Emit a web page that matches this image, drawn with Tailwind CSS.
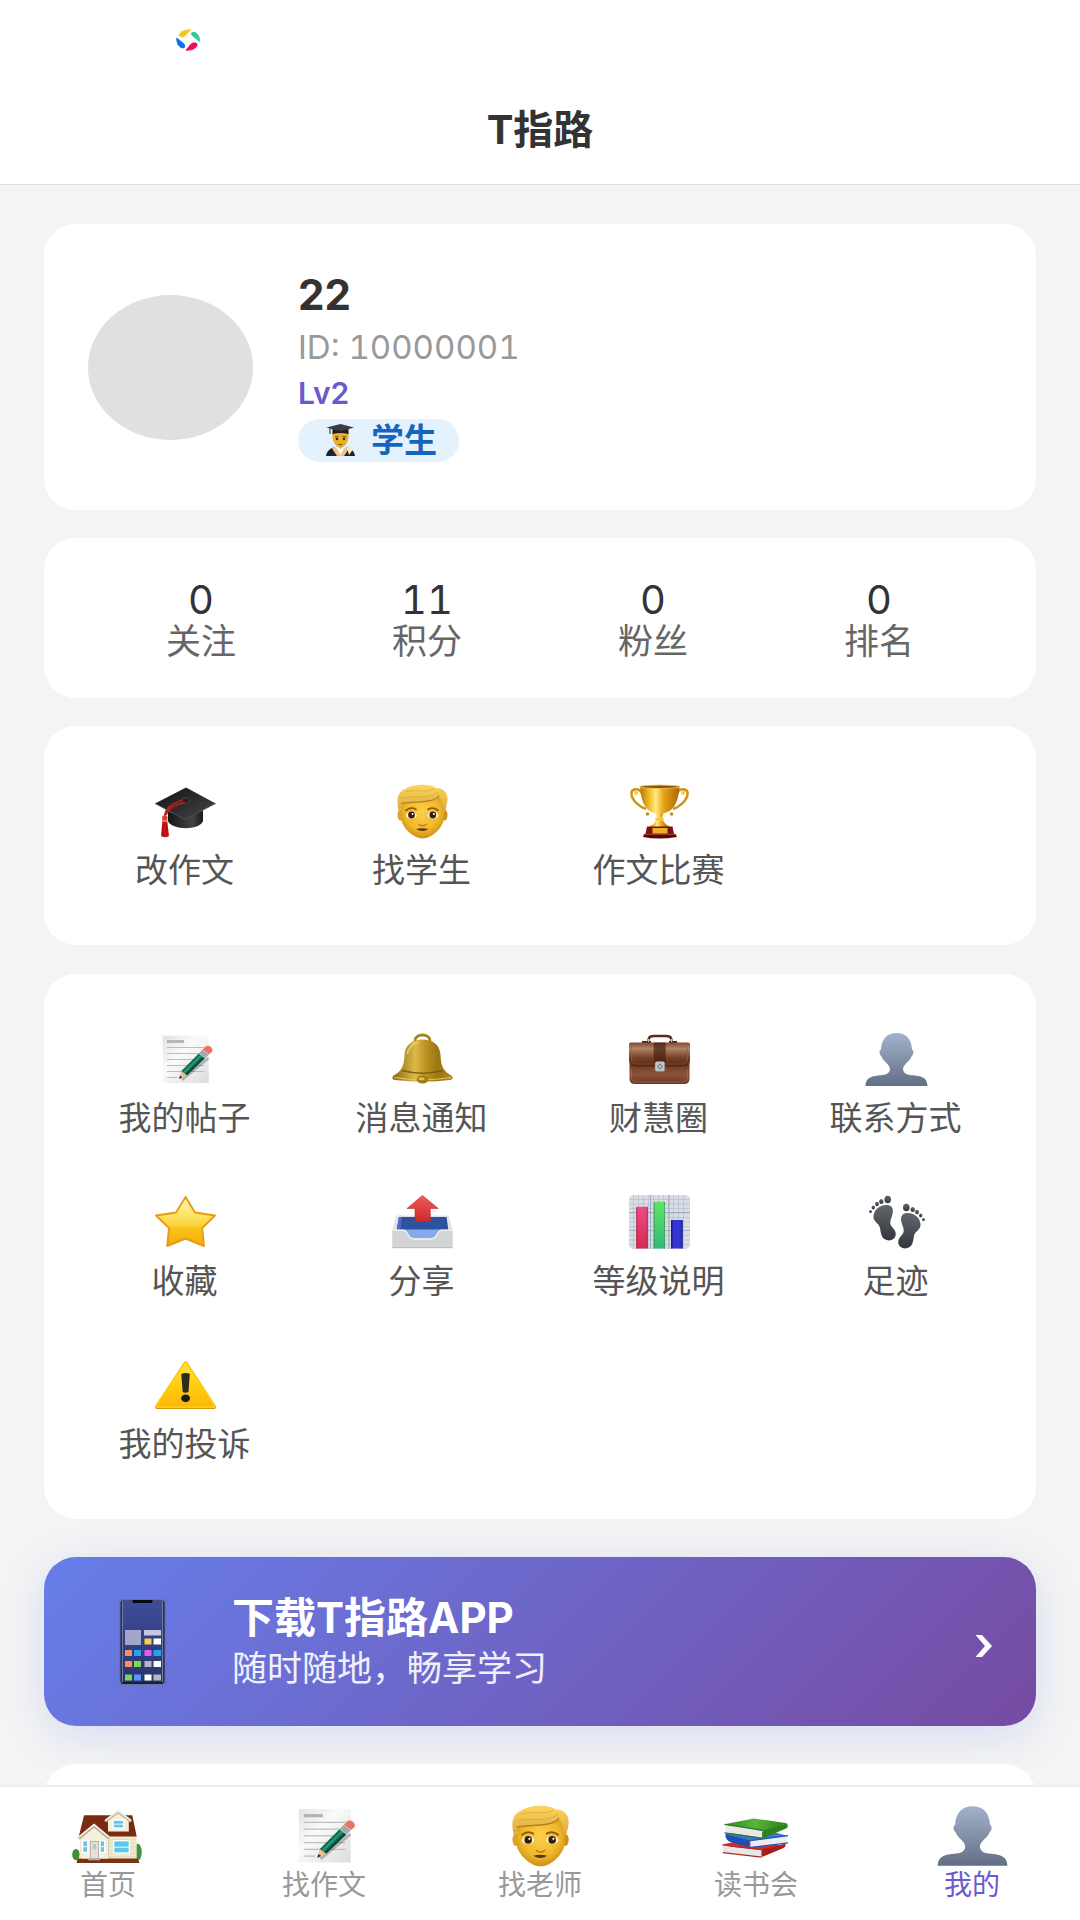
<!DOCTYPE html>
<html lang="zh-CN">
<head>
  <meta charset="UTF-8">
  <title>T指路</title>
  <meta name="viewport" content="width=device-width, initial-scale=1.0">
  <script src="https://cdn.jsdelivr.net/npm/@tailwindcss/browser@4"></script>
</head>
<body class="bg-[#f4f4f4] text-[#333] h-screen flex flex-col overflow-hidden font-['Inter','Noto_Sans_CJK_SC',sans-serif]">

  <!-- shared icons -->
  <svg class="absolute size-0" aria-hidden="true">
    <defs>
      <linearGradient id="g-board" x1="0" y1="0" x2="1" y2="1"><stop offset="0" stop-color="#111"/><stop offset=".5" stop-color="#2c2c2e"/><stop offset="1" stop-color="#4a4a4a"/></linearGradient>
      <linearGradient id="g-cap" x1="0" y1="0" x2="1" y2="0"><stop offset="0" stop-color="#141414"/><stop offset=".7" stop-color="#444"/><stop offset="1" stop-color="#1a1a1a"/></linearGradient>
      <radialGradient id="g-face" cx=".5" cy=".4" r=".6"><stop offset="0" stop-color="#fbd04a"/><stop offset=".65" stop-color="#f0b92c"/><stop offset="1" stop-color="#cc8f14"/></radialGradient>
      <linearGradient id="g-hair" x1="0" y1="0" x2="0" y2="1"><stop offset="0" stop-color="#fbd65c"/><stop offset="1" stop-color="#dba63a"/></linearGradient>
      <linearGradient id="g-gold" x1="0" y1="0" x2="1" y2="0"><stop offset="0" stop-color="#b9720a"/><stop offset=".25" stop-color="#f5c22a"/><stop offset=".4" stop-color="#ffe98a"/><stop offset=".6" stop-color="#e5a315"/><stop offset="1" stop-color="#a8640a"/></linearGradient>
      <linearGradient id="g-paper" x1="0" y1="0" x2="1" y2="1"><stop offset="0" stop-color="#e2e2e2"/><stop offset=".4" stop-color="#fafafa"/><stop offset="1" stop-color="#dcdcdc"/></linearGradient>
      <linearGradient id="g-bell" x1="0" y1="0" x2="1" y2="0"><stop offset="0" stop-color="#8a680c"/><stop offset=".38" stop-color="#dcb94a"/><stop offset=".55" stop-color="#bd9422"/><stop offset=".75" stop-color="#9c7712"/><stop offset="1" stop-color="#b08a1e"/></linearGradient>
      <linearGradient id="g-flap" x1="0" y1="0" x2="0" y2="1"><stop offset="0" stop-color="#7d4a30"/><stop offset=".25" stop-color="#b08465"/><stop offset=".6" stop-color="#7c452b"/><stop offset="1" stop-color="#54240f"/></linearGradient>
      <linearGradient id="g-case" x1="0" y1="0" x2="0" y2="1"><stop offset="0" stop-color="#5e2f1a"/><stop offset=".6" stop-color="#8a5438"/><stop offset="1" stop-color="#6a3720"/></linearGradient>
      <linearGradient id="g-bust" x1="0" y1="0" x2="0" y2="1"><stop offset="0" stop-color="#a3b2cb"/><stop offset="1" stop-color="#626e84"/></linearGradient>
      <linearGradient id="g-star" x1="0" y1="0" x2="0" y2="1"><stop offset="0" stop-color="#fff6c4"/><stop offset=".3" stop-color="#fde773"/><stop offset=".58" stop-color="#fbd43a"/><stop offset=".62" stop-color="#f9c41c"/><stop offset="1" stop-color="#f5ac08"/></linearGradient>
      <linearGradient id="g-arrow" x1="0" y1="0" x2="0" y2="1"><stop offset="0" stop-color="#ef5b58"/><stop offset="1" stop-color="#d0282c"/></linearGradient>
      <linearGradient id="g-red" x1="0" y1="0" x2="0" y2="1"><stop offset="0" stop-color="#ee4a86"/><stop offset="1" stop-color="#d52a50"/></linearGradient>
      <linearGradient id="g-green" x1="0" y1="0" x2="0" y2="1"><stop offset="0" stop-color="#62e468"/><stop offset="1" stop-color="#35b877"/></linearGradient>
      <linearGradient id="g-warn" x1="0" y1="0" x2="0" y2="1"><stop offset="0" stop-color="#ffe14a"/><stop offset=".5" stop-color="#ffce10"/><stop offset="1" stop-color="#fcb80a"/></linearGradient>
      <linearGradient id="g-foot" x1="0" y1="0" x2="0" y2="1"><stop offset="0" stop-color="#62666e"/><stop offset="1" stop-color="#34373d"/></linearGradient>
      <linearGradient id="g-screen" x1="0" y1="0" x2="0" y2="1"><stop offset="0" stop-color="#3f4c9c"/><stop offset="1" stop-color="#27356c"/></linearGradient>
      <linearGradient id="g-book" x1="0" y1="0" x2="1" y2="0"><stop offset="0" stop-color="#2f8a1e"/><stop offset=".5" stop-color="#58b53c"/><stop offset="1" stop-color="#2b7d18"/></linearGradient>
    </defs>

    <symbol id="cap" viewBox="0 0 64 56">
      <path d="M15 27V37C18 46 46 47 50 37V26L32 34Z" fill="url(#g-cap)"/>
      <path d="M2 19.5 33 3.5 62.7 19.5 31.7 35.5Z" fill="url(#g-board)"/>
      <path d="M2 19.5 31.7 35.5 62.7 19.5" fill="none" stroke="#555" stroke-width=".7"/>
      <ellipse cx="32.5" cy="16.8" rx="4" ry="3" fill="#222" stroke="#555" stroke-width=".6"/>
      <path d="M30 16C20 19 12 23 11.5 34M32 18.5C22 20 15 25 13 31" fill="none" stroke="#b8201c" stroke-width="1.7"/>
      <path d="M9.5 35H14L16 52Q12 54.5 8 52Z" fill="#cc1416"/>
      <path d="M10.5 40 10 52M13.5 40 14 52" stroke="#8c0808" stroke-width=".7"/>
      <ellipse cx="11.8" cy="34" rx="2.7" ry="2.8" fill="#e03a34"/>
      <path d="M9.2 37H14.8" stroke="#f0b0a0" stroke-width="1.2"/>
    </symbol>

    <symbol id="head" viewBox="0 0 64 56">
      <ellipse cx="10.5" cy="31" rx="3" ry="5.5" fill="#dda324"/>
      <ellipse cx="54.5" cy="31" rx="3" ry="5.5" fill="#d09018"/>
      <path d="M11 18C11 8 54 8 54 18L54 33C54 43 42 54.5 32.6 54.5S11 43 11 33Z" fill="url(#g-face)"/>
      <path d="M9 28C6 17 7 8 15 5 22 0 40-1 46 4 55 4 59 11 57 19L55 29C52 23 53 19 49 12.5 44 20 24 18 12 20 11 23 11 26 9 28Z" fill="url(#g-hair)"/>
      <path d="M11.5 19.5C28 17 44 19.5 49 11.5" fill="none" stroke="#b87e1c" stroke-width="1.3"/>
      <path d="M11 14C25 11 40 16 48 8M15 8C24 5 36 9 44 5" fill="none" stroke="#dba941" stroke-width=".8"/>
      <path d="M16 26.5Q21 22.5 26 25.5M38 25.5Q43 22.5 48 26.5" fill="none" stroke="#8b5a0c" stroke-width="1.7" stroke-linecap="round"/>
      <ellipse cx="21.3" cy="31.3" rx="5.3" ry="3.5" fill="#fff6df"/>
      <ellipse cx="43" cy="31.3" rx="5.3" ry="3.5" fill="#fff6df"/>
      <circle cx="21.5" cy="31" r="3.4" fill="#35200f"/>
      <circle cx="42.8" cy="31" r="3.4" fill="#35200f"/>
      <circle cx="22.6" cy="30" r="1" fill="#fff"/>
      <circle cx="43.9" cy="30" r="1" fill="#fff"/>
      <path d="M29 40.5Q32.5 43 36 40.5" fill="none" stroke="#b97a12" stroke-width="1.4" stroke-linecap="round"/>
      <path d="M26 45Q32.3 43.5 38.5 45 32.5 49 26 45Z" fill="#5f3412"/>
    </symbol>

    <symbol id="trophy" viewBox="0 0 64 56">
      <path d="M15 9C11 3 4 5 4.5 10 5 17 13 23 19 25M50 9C54 3 61 5 60.5 10 60 17 52 23 46 25" fill="none" stroke="#cf961a" stroke-width="2.6"/>
      <circle cx="9" cy="9" r="2" fill="#f1cc55"/><circle cx="56" cy="9" r="2" fill="#f1cc55"/>
      <circle cx="20.5" cy="30" r="1.8" fill="#c98d18"/><circle cx="44.5" cy="30" r="1.8" fill="#c98d18"/>
      <path d="M13 2.5C14 16 17 29 32.5 30 48 29 51.5 16 52.5 2.5Z" fill="url(#g-gold)"/>
      <ellipse cx="32.7" cy="2.8" rx="20" ry="1.7" fill="#8c5407" stroke="#f5cd50" stroke-width=".8"/>
      <path d="M28.5 29.5H36.5L35 34Q37 40 43 43H22Q28 40 30 34Z" fill="url(#g-gold)"/>
      <ellipse cx="32.5" cy="35" rx="4.5" ry="1.8" fill="#f3cb47"/>
      <path d="M20 42.5H45.5L47 50H18.5Z" fill="#7c140e"/>
      <path d="M17 50H48.5L50 53Q32 56 16 53Z" fill="#5a0b08"/>
      <path d="M17 50.3H48.5" stroke="#c0504a" stroke-width=".8"/>
      <rect x="25.5" y="44" width="15" height="5.5" fill="#e9b22c"/>
    </symbol>

    <symbol id="memo" viewBox="0 0 64 56">
      <rect x="9.7" y="3.7" width="46" height="47.3" fill="url(#g-paper)"/>
      <path d="M14 9.5H31" stroke="#b2b2b2" stroke-width="2.8"/>
      <path d="M14 15.5H51M14 21.5H51M14 27.5H51M14 33.5H51M14 39.5H51M14 45.5H24" stroke="#bdbdbd" stroke-width="1.1"/>
      <path d="M29 48 55.5 26" fill="none" stroke="#000" stroke-opacity=".25" stroke-width="2.5"/>
      <path d="M26 47 28.3 39 34 43.2Z" fill="#efbd92"/>
      <path d="M26 47 27 43.6 29.5 45.4Z" fill="#333"/>
      <path d="M28.3 39 45.8 21.5 51.8 26.3 34 43.2Z" fill="#0e6b52"/>
      <path d="M30 40 47 23 48.8 24.3 31.8 41.3Z" fill="#2c9474"/>
      <path d="M34 43.2 51.8 26.3 50.3 25 32.5 42Z" fill="#084536"/>
      <path d="M45.8 21.5 49.8 17.5 56 22.3 51.8 26.3Z" fill="#b6babb"/>
      <path d="M47.2 20.2 53.2 25M48.6 18.8 54.6 23.6" stroke="#7e8586" stroke-width=".8"/>
      <path d="M49.8 17.5 52.5 14.5Q55 13 58 15 60.5 17.500 58.800 20L56 22.3Z" fill="#e8736a"/>
    </symbol>

    <symbol id="bell" viewBox="0 0 64 56">
      <path d="M25 9C25 1 40 1 40 9" fill="none" stroke="#a8841e" stroke-width="2.8"/>
      <path d="M14.5 23C15 12 23 7.5 32.5 7.5S50 12 50.5 23C51 34 53 39 62 44Q64 47 60 48 33 51.5 5 48 1 47 3 44C12 39 14 34 14.5 23Z" fill="url(#g-bell)"/>
      <path d="M12 38.5Q32 44 53 38.5" fill="none" stroke="#7c5e0c" stroke-width="1.3"/>
      <path d="M4 45.5Q32 50 61 45.5" fill="none" stroke="#e3c766" stroke-width="1"/>
      <path d="M17 22Q20 12 29 10" fill="none" stroke="#e9cf72" stroke-width="1.6"/>
      <ellipse cx="32.5" cy="47.5" rx="5.8" ry="4" fill="#a07a16"/>
      <ellipse cx="31.5" cy="46.8" rx="3" ry="1.5" fill="#dfc05a"/>
    </symbol>

    <symbol id="briefcase" viewBox="0 0 64 56">
      <path d="M21.5 10V7.5Q22 4 27 4H39Q44 4 44.5 7.5V10" fill="none" stroke="#5b2c1c" stroke-width="2.3"/>
      <path d="M15 10H24M42 10H50" stroke="#4b2110" stroke-width="2"/>
      <path d="M21.5 7V10M44.5 7V10" stroke="#c9c9c9" stroke-width="1.4"/>
      <path d="M2.5 28H62.5V47Q62.5 52 57 52H8Q2.5 52 2.5 47Z" fill="url(#g-case)"/>
      <path d="M2 12Q2 10.5 4 10.5H61Q63 10.5 63 12V29Q62 34.5 56 34.5H9Q3 34.5 2 29Z" fill="url(#g-flap)"/>
      <path d="M4.5 12.5V28Q5 32 10 32H55Q60 32 60.5 28V12.5" fill="none" stroke="#8f6045" stroke-width=".6"/>
      <path d="M4.5 37V46Q5 50 9 50H56Q60 50 60.5 46V37" fill="none" stroke="#a3755a" stroke-width=".6"/>
      <rect x="26.7" y="10.5" width="12" height="24" fill="#49200f" fill-opacity=".7"/>
      <rect x="28" y="29.5" width="9.8" height="10" rx="1.8" fill="#c4c7c8" stroke="#777" stroke-width=".6"/>
      <path d="M32.9 31.3 36 34.5 32.9 37.7 29.8 34.5Z" fill="#7f8485"/>
      <circle cx="32.9" cy="34.5" r="1" fill="#f3f3f3"/>
    </symbol>

    <symbol id="bust" viewBox="0 0 64 56">
      <path d="M32.5 1C42 1 47.5 7 48 17.5 50 18.5 50 22 47.5 24.5 45.5 30 39 32 39 37.5 40 43 46 43 51 43.5 60 44.5 63 47 63.5 54H1.5C2 47 5 44.5 14 43.5 19 43 25 43 26 37.500 26 32 19.5 30 17.5 24.5 15 22 15 18.5 17 17.5 17.5 7 23 1 32.5 1Z" fill="url(#g-bust)"/>
    </symbol>

    <symbol id="star" viewBox="0 0 64 56">
      <path d="M32.6 2 42 17.5 62 20.5 49.2 33 51 51 32.6 43.5 14.2 51 16 33 3 20.5 23 17.5Z" fill="url(#g-star)" stroke="#e79b12" stroke-width="1.9" stroke-linejoin="round"/>
    </symbol>

    <symbol id="outbox" viewBox="0 0 64 56">
      <path d="M6.5 20.5H58.5L62.7 35H2.2Z" fill="#dfe3e9"/>
      <path d="M9 22H56.5L58.5 36H6.5Z" fill="#2f529f"/>
      <path d="M9 22 12 22 10.5 34 6.5 36Z" fill="#4a71c0"/>
      <path d="M13 34.5H52V46H13Z" fill="#85aaea"/>
      <path d="M25 13.5H17L32.4 .5 48.3 13.5H40.3V26.5H25Z" fill="url(#g-arrow)" stroke="#bd2529" stroke-width=".6"/>
      <path d="M2.2 34.7H13Q16 34.7 18 39 20 43.5 25 43.5H40Q45 43.5 47 39 49 34.7 52 34.7H62.7V53H2.2Z" fill="#d3d4d5"/>
      <path d="M2.2 35.2H13Q16 35.2 18 39.5 20 44 25 44H40Q45 44 47 39.5 49 35.2 52 35.2H62.7" fill="none" stroke="#f4f5f6" stroke-width="1.3"/>
      <path d="M2.2 52.7H62.7" stroke="#b3b3b3" stroke-width=".8"/>
    </symbol>

    <symbol id="chart" viewBox="0 0 64 56">
      <rect x="2" y="0" width="61" height="54" rx="4.5" fill="#d9dde6"/>
      <path d="M6.5 0V54M11.5 0V54M16.5 0V54M21.5 0V54M26.5 0V54M31.5 0V54M36.5 0V54M41.5 0V54M46.5 0V54M51.5 0V54M56.5 0V54M2 4.5H63M2 9H63M2 13.5H63M2 18H63M2 22.5H63M2 27H63M2 31.5H63M2 40.5H63M2 45H63M2 49.5H63" stroke="#b7bdcc" stroke-width=".7"/>
      <path d="M2 17.5H63M2 35.5H63M23.5 0V54M42 0V54" stroke="#98a0b5" stroke-width=".8"/>
      <path d="M9.3 11.7H20.7V53.5H9.3Z" fill="url(#g-red)"/>
      <path d="M26.7 6.7H38V53.5H26.7Z" fill="url(#g-green)"/>
      <path d="M44 25H55.5V53.5H44Z" fill="#3434cf"/>
      <path d="M9.8 12V53.5M20.3 12V53.5" stroke="#a51f45" stroke-width=".8"/>
      <path d="M27.2 7V53.5M37.6 7V53.5" stroke="#37a058" stroke-width=".8"/>
      <path d="M44.8 25V53.5M55 25V53.5" stroke="#181879" stroke-width="1.2"/>
    </symbol>

    <symbol id="feet" viewBox="0 0 64 56">
      <g fill="url(#g-foot)">
        <ellipse cx="23.7" cy="4.5" rx="3.3" ry="3.8"/>
        <ellipse cx="17.3" cy="6.5" rx="2.2" ry="2.5"/>
        <ellipse cx="13" cy="9" rx="1.9" ry="2.2"/>
        <ellipse cx="9.3" cy="12.5" rx="1.7" ry="1.9"/>
        <ellipse cx="6.5" cy="16.5" rx="1.5" ry="1.6"/>
        <path d="M9.5 21C10 14 17 9.5 23 10 29 10.5 30 15 28 21 26 27 25 29 29 33 34 38 32 45 25 45.5 18 45 17 40 16 33 15 28 9 27 9.5 21Z"/>
        <ellipse cx="42.3" cy="12.5" rx="3.3" ry="3.8"/>
        <ellipse cx="48.7" cy="14.5" rx="2.2" ry="2.5"/>
        <ellipse cx="53" cy="17" rx="1.9" ry="2.2"/>
        <ellipse cx="56.7" cy="20.5" rx="1.7" ry="1.9"/>
        <ellipse cx="59.5" cy="24.5" rx="1.5" ry="1.6"/>
        <path d="M56.5 29C56 22 49 17.5 43 18 37 18.5 36 23 38 29 40 35 41 37 37 41 32 46 34 53 41 53.5 48 53 49 48 50 41 51 36 57 35 56.5 29Z"/>
      </g>
    </symbol>

    <symbol id="warning" viewBox="0 0 64 56">
      <path d="M32.6 5.5 61 49H4Z" fill="#d79a08" stroke="#d79a08" stroke-width="4" stroke-linejoin="round"/>
      <path d="M32.6 5 61 48.2H4Z" fill="#ffcb0f" stroke="#ffcb0f" stroke-width="3.6" stroke-linejoin="round"/>
      <path d="M32.6 5 61 48.2H4Z" fill="url(#g-warn)"/>
      <path d="M28.3 16Q32.5 14 36.8 16L35.5 34Q32.5 35.5 29.7 34Z" fill="#2d2c20"/>
      <ellipse cx="32.6" cy="40.3" rx="4.4" ry="3.9" fill="#1d1c18"/>
    </symbol>

    <symbol id="house" viewBox="0 0 64 56">
      <ellipse cx="3.5" cy="44" rx="3.3" ry="5" fill="#3d8f3a"/>
      <ellipse cx="58.3" cy="42" rx="3.7" ry="7.500" fill="#3f9440"/>
      <path d="M7 27H57.5V48H7Z" fill="#f1ead0"/>
      <path d="M33 31H57M33 34H57M33 37H57M33 40H57M33 43H57M33 46H57" stroke="#d8cfae" stroke-width=".6"/>
      <path d="M5 47.5H58.5L60 51.5H4Z" fill="#7b3214"/>
      <path d="M10.7 9.2H53.6L57.5 28H6Z" fill="#7a2a0e"/>
      <path d="M32 13 41.2 7 50.5 13V23.5H32Z" fill="#f6f0da"/>
      <path d="M29.5 14.5 41 6 52.5 14.5" fill="none" stroke="#bfbcb0" stroke-width="2.6"/>
      <path d="M29.5 13.7 41 5.3 52.5 13.7" fill="none" stroke="#f4f2ea" stroke-width="1.3"/>
      <path d="M8 29 19.6 18.5 32 29V47.5H8Z" fill="#f6f0da"/>
      <path d="M6 29.5 19.6 18.5 33 29.5" fill="none" stroke="#b5b0a0" stroke-width="2.8"/>
      <path d="M6 28.5 19.6 17.4 33 28.5" fill="none" stroke="#f4f2ea" stroke-width="1.4"/>
      <path d="M32.5 29V47.5" stroke="#cfc7a8" stroke-width=".8"/>
      <g fill="#5ec8ea" stroke="#fff" stroke-width="1.2">
        <rect x="36.5" y="13.5" width="9.5" height="7"/>
        <rect x="9.5" y="31.7" width="4.5" height="10.5"/>
        <rect x="25" y="31.7" width="4" height="10.5"/>
        <rect x="37" y="31.7" width="14" height="11"/>
      </g>
      <path d="M36.5 17H46M9.5 37H14M25 37H29M37 37.5H51" stroke="#fff" stroke-width=".8"/>
      <rect x="16.5" y="32.5" width="7" height="15" fill="#e6e3dd" stroke="#aaa69d" stroke-width=".7"/>
      <rect x="18.5" y="34.5" width="3" height="5" fill="#b9c4cc"/>
      <path d="M15 47.5H25V49H14Z" fill="#b3b0a8"/>
    </symbol>

    <symbol id="books" viewBox="0 0 64 56">
      <path d="M2 35 20 31 58 36.5 37 44.5Z" fill="#c8322e"/>
      <path d="M2.5 36.5 37 40V46L2.5 42Z" fill="#e9e7e6"/>
      <path d="M37 39.5 58 34.5Q59 37 56 38.5L37 46.3Z" fill="#a81d1f"/>
      <path d="M2 35.5 37 39.8M2.5 42.3 37 46.3" fill="none" stroke="#b02425" stroke-width="1"/>
      <path d="M5 25.5 40 22 60.5 27.5 27 32Z" fill="#3d74dc"/>
      <path d="M5 25.5 27 31.500Q24.5 34.5 26 37.8L8 32.5Q4 29 5 25.5Z" fill="#1f4fb5"/>
      <path d="M27 31.8 59.5 27.5V33.5L27 37.5Z" fill="#ecebee"/>
      <path d="M27 31.7 60.5 27.3M26 37.9 60.5 33.7" stroke="#2856b4" stroke-width="1.1"/>
      <path d="M4 17.2 30 11.9 59.4 16.3 38.7 23Z" fill="url(#g-book)"/>
      <path d="M5 18 38 23V29L5 24.5Z" fill="#e8e8e6"/>
      <path d="M38.5 22.5 59.4 16.3Q60.8 18 59.7 20.5L38 29.8Q36.5 26 38.5 22.5Z" fill="#2d8219"/>
      <path d="M4 17.3 38.5 22.6M4 24.8 38 29.6" stroke="#2b7819" stroke-width="1.1"/>
    </symbol>
  </svg>

  <header class="bg-white border-b border-[#dedede] shrink-0">
    <div class="flex items-center h-20 px-44">
      <svg class="w-[25px] h-[22px]" viewBox="0 0 25 22">
        <g stroke-width=".9" stroke-linejoin="round">
          <path d="M3 6.500Q4.500 1 14.500 .7L9 6.800Q7 8.500 4.500 7.700Z" fill="#f8c51c" stroke="#f8c51c"/>
          <path d="M16 3.300Q19.500 2.300 22 6 24 9.500 23.800 12.500L17 7.300Q14.500 5 16 3.300Z" fill="#36c9a0" stroke="#36c9a0"/>
          <path d="M.8 9 8 15Q9.700 17 8 19 4.500 19.500 2 15.500 .5 12 .8 9Z" fill="#0a6ff0" stroke="#0a6ff0"/>
          <path d="M10 21.200 14.800 15.300Q17 13.300 20 14 22 15.300 20.500 17.500 17.500 21.500 10 21.200Z" fill="#ee0f52" stroke="#ee0f52"/>
        </g>
      </svg>
    </div>
    <h1 class="h-[104px] pb-1 flex items-center justify-center text-[40px] font-bold">T指路</h1>
  </header>

  <main class="flex-1 min-h-0 overflow-hidden px-11 pt-[39px] flex flex-col">
    <section class="shrink-0 bg-white rounded-[32px] p-11 h-[286px] flex items-center gap-[45px]">
      <div class="w-[165px] h-[145px] rounded-[50%] bg-[#e0e0e0]"></div>
      <div class="flex flex-col items-start">
        <h2 class="text-[42px] leading-[44px] font-bold">22</h2>
        <p class="mt-[10px] text-[33px] leading-10 tabular-nums text-[#999]">ID: 10000001</p>
        <p class="mt-[10px] text-[30px] leading-8 font-semibold text-[#6a5acd]">Lv2</p>
        <span class="mt-[10px] h-[43px] pl-7 pr-[22px] flex items-center gap-4 rounded-full bg-[#e3f2fd] text-[#1565c0] text-[33px] leading-10 font-bold">
          <svg class="w-[29px] h-8" viewBox="0 0 29 32">
            <path d="M0 32Q1 25 8 23.5L14.5 28 21 23.5Q28 25 29 32Z" fill="#22222a"/>
            <path d="M6 24.5 9 23 14.5 28.5 20 23 23 24.5 18 32H11Z" fill="#f0c48c"/>
            <path d="M10.5 23 14.5 31 18.5 23Z" fill="#fff"/>
            <path d="M6.5 8H22.5V14Q22 20 14.5 25 7 20 6.5 14Z" fill="#e9b02a"/>
            <path d="M9 12.8H12.5M16.5 12.8H20" stroke="#6b420a" stroke-width="1"/>
            <circle cx="11" cy="15" r="1.2" fill="#3a2410"/><circle cx="18" cy="15" r="1.2" fill="#3a2410"/>
            <path d="M12.5 20.5H16.5" stroke="#8a4a12" stroke-width="1.1"/>
            <path d="M6.5 5H22.5V10Q14.5 8 6.5 10Z" fill="#1c1c1e"/>
            <path d="M.5 3.5 14.5 0 28 3.5 14.5 7.5Z" fill="#3c3c40"/>
            <path d="M4 4V10" stroke="#222" stroke-width="1"/>
            <path d="M21 24 26 21.5 28 24 23 31Z" fill="#f4ead2"/>
          </svg>
          学生
        </span>
      </div>
    </section>

    <section class="shrink-0 mt-7 bg-white rounded-[32px] px-11 pt-1 h-40 grid grid-cols-4 items-center text-center tabular-nums">
      <a href="#"><b class="block text-[40px] leading-[42px] font-normal">0</b><span class="block text-[35px] leading-10 text-[#666]">关注</span></a>
      <a href="#"><b class="block text-[40px] leading-[42px] font-normal">11</b><span class="block text-[35px] leading-10 text-[#666]">积分</span></a>
      <a href="#"><b class="block text-[40px] leading-[42px] font-normal">0</b><span class="block text-[35px] leading-10 text-[#666]">粉丝</span></a>
      <a href="#"><b class="block text-[40px] leading-[42px] font-normal">0</b><span class="block text-[35px] leading-10 text-[#666]">排名</span></a>
    </section>

    <section class="shrink-0 mt-7 bg-white rounded-[32px] px-[22px] py-7 grid grid-cols-4 text-[33px] leading-9 text-[#555]">
      <a href="#" class="flex flex-col items-center gap-3 pt-[30px] pb-[29px]"><svg class="w-16 h-14"><use href="#cap"/></svg>改作文</a>
      <a href="#" class="flex flex-col items-center gap-3 pt-[30px] pb-[29px]"><svg class="w-16 h-14"><use href="#head"/></svg>找学生</a>
      <a href="#" class="flex flex-col items-center gap-3 pt-[30px] pb-[29px]"><svg class="w-16 h-14"><use href="#trophy"/></svg>作文比赛</a>
    </section>

    <section class="shrink-0 mt-[29px] bg-white rounded-[32px] px-[22px] py-7 grid grid-cols-4 text-[33px] leading-9 text-[#555]">
      <a href="#" class="flex flex-col items-center gap-3 pt-[30px] pb-[29px]"><svg class="w-16 h-14"><use href="#memo"/></svg>我的帖子</a>
      <a href="#" class="flex flex-col items-center gap-3 pt-[30px] pb-[29px]"><svg class="w-16 h-14"><use href="#bell"/></svg>消息通知</a>
      <a href="#" class="flex flex-col items-center gap-3 pt-[30px] pb-[29px]"><svg class="w-16 h-14"><use href="#briefcase"/></svg>财慧圈</a>
      <a href="#" class="flex flex-col items-center gap-3 pt-[30px] pb-[29px]"><svg class="w-16 h-14"><use href="#bust"/></svg>联系方式</a>
      <a href="#" class="flex flex-col items-center gap-3 pt-[30px] pb-[29px]"><svg class="w-16 h-14"><use href="#star"/></svg>收藏</a>
      <a href="#" class="flex flex-col items-center gap-3 pt-[30px] pb-[29px]"><svg class="w-16 h-14"><use href="#outbox"/></svg>分享</a>
      <a href="#" class="flex flex-col items-center gap-3 pt-[30px] pb-[29px]"><svg class="w-16 h-14"><use href="#chart"/></svg>等级说明</a>
      <a href="#" class="flex flex-col items-center gap-3 pt-[30px] pb-[29px]"><svg class="w-16 h-14"><use href="#feet"/></svg>足迹</a>
      <a href="#" class="flex flex-col items-center gap-3 pt-[30px] pb-[29px]"><svg class="w-16 h-14"><use href="#warning"/></svg>我的投诉</a>
    </section>

    <!-- app download banner -->
    <a href="#" class="shrink-0 mt-[38px] h-[169px] rounded-[32px] pl-[75px] pr-11 flex items-center text-white bg-[linear-gradient(135deg,#667eea,#764ba2)] shadow-[0_10px_44px_rgba(102,126,234,0.2)]">
      <svg class="w-[47px] h-[86px]" viewBox="0 0 47 86">
        <rect x=".7" y=".7" width="45.6" height="84.6" rx="3" fill="#2a2f55" stroke="#6d7193" stroke-width="1.4"/>
        <rect x="3.5" y="2" width="40" height="82" rx="1.5" fill="url(#g-screen)"/>
        <path d="M3.5 2V84M43.5 2V84" stroke="#7078a5" stroke-width="1"/>
        <path d="M13.5 1H33.5V2.5Q33.5 4 32 4H15Q13.5 4 13.5 2.5Z" fill="#08080c"/>
        <path d="M3 84H44" stroke="#0c1230" stroke-width="1.5"/>
        <path d="M6 31H22V46H6Z" fill="#a3a6c9"/>
        <path d="M25 31H42V36.5H25Z" fill="#c6c8e2"/>
        <path d="M25.5 39.5H32.5V45.5H25.5Z" fill="#fbcf4c"/>
        <path d="M34.5 39.5H42V45.5H34.5ZM34.5 62H42V68H34.5ZM25.5 75.5H32.5V81.5H25.5Z" fill="#fff"/>
        <path d="M6 51H13V57H6ZM6 62H13V68H6Z" fill="#fb8f60"/>
        <path d="M15 51H22V57H15ZM34.5 51H42V57H34.5Z" fill="#22a4f2"/>
        <path d="M25.5 51H32.5V57H25.5Z" fill="#e35bf5"/>
        <path d="M15 62H22V68H15ZM6 75.5H13V81.5H6Z" fill="#7fd45a"/>
        <path d="M25.5 62H32.5V68H25.5ZM34.5 75.5H42V81.5H34.5Z" fill="#b4b6c6"/>
        <path d="M15 75.5H22V81.5H15Z" fill="#5a96f8"/>
      </svg>
      <div class="ml-[66px] flex-1">
        <h3 class="text-[42px] leading-[52px] font-bold">下载T指路APP</h3>
        <p class="text-[35px] leading-[48px] text-white/90">随时随地，畅享学习</p>
      </div>
      <svg class="mt-2 w-[17px] h-[22px]" viewBox="0 0 17 22"><path d="M.5 0H7L17 11 7 22H.5L10 11Z" fill="#fff"/></svg>
    </a>

    <section class="shrink-0 mt-[38px] h-24 bg-white rounded-[32px]"></section>
  </main>

  <nav class="shrink-0 bg-white border-t-2 border-[#eee] grid grid-cols-5 pt-[18px] pb-[19px] text-[28px] leading-8 text-[#999]">
    <a href="#" class="flex flex-col items-center gap-px"><svg class="w-[72px] h-[63px]"><use href="#house"/></svg>首页</a>
    <a href="#" class="flex flex-col items-center gap-px"><svg class="w-[72px] h-[63px]"><use href="#memo"/></svg>找作文</a>
    <a href="#" class="flex flex-col items-center gap-px"><svg class="w-[72px] h-[63px]"><use href="#head"/></svg>找老师</a>
    <a href="#" class="flex flex-col items-center gap-px"><svg class="w-[72px] h-[63px]"><use href="#books"/></svg>读书会</a>
    <a href="#" class="flex flex-col items-center gap-px text-[#6a5acd]"><svg class="w-[72px] h-[63px]"><use href="#bust"/></svg>我的</a>
  </nav>

</body>
</html>
